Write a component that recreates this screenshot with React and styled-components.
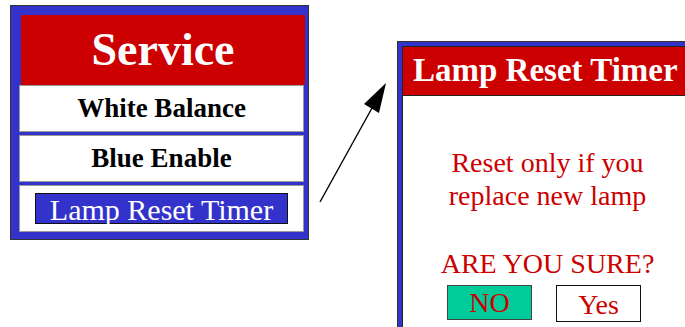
import React from "react";
import styled, { createGlobalStyle } from "styled-components";

const Global = createGlobalStyle`
  html, body { margin: 0; padding: 0; background: #ffffff; overflow: hidden; }
  body { width: 685px; height: 327px; font-family: "Liberation Serif", "Times New Roman", serif; }
`;

const BLUE = "#3333cc";
const RED = "#cc0000";

const Page = styled.div`
  display: flex;
  align-items: flex-start;
  padding: 5px 0 0 10px;
  width: 685px;
  height: 327px;
  box-sizing: border-box;
  overflow: hidden;
`;

const MenuPanel = styled.div`
  flex: none;
  width: 299px;
  box-sizing: border-box;
  border: 1px solid #333;
  background: ${BLUE};
  padding: 9px 4px 7px 8px;
  display: flex;
  flex-direction: column;
`;

const MenuTitle = styled.div`
  margin: 0 -1px 0 2px;
  height: 70px;
  background: ${RED};
  color: #fff;
  font-weight: bold;
  font-size: 46px;
  line-height: 70px;
  text-align: center;
`;

const MenuList = styled.div`
  display: flex;
  flex-direction: column;
  gap: 3px;
`;

const MenuRow = styled.div`
  height: 47px;
  box-sizing: border-box;
  border: 1px solid #999;
  background: #fff;
  display: flex;
  align-items: center;
  justify-content: center;
  font-weight: bold;
  font-size: 27px;
  color: #000;
`;

const Selected = styled.div`
  width: 253px;
  height: 31px;
  box-sizing: border-box;
  border: 1px solid #111;
  background: ${BLUE};
  color: #fff;
  font-weight: normal;
  font-size: 30px;
  line-height: 29px;
  padding-top: 1px;
  text-align: center;
  white-space: nowrap;
`;

const ArrowArt = styled.svg`
  flex: none;
  width: 88px;
  height: 220px;
  display: block;
`;

const Dialog = styled.div`
  flex: none;
  margin-top: 36px;
  width: 302px;
  height: 300px;
  box-sizing: border-box;
  border: 1px solid #333;
  background: ${BLUE};
  padding: 4px 0 0 4px;
  display: flex;
  flex-direction: column;
`;

const DialogTitle = styled.div`
  height: 50px;
  box-sizing: border-box;
  border: 1px solid #222;
  background: ${RED};
  color: #fff;
  font-weight: bold;
  font-size: 33px;
  line-height: 47px;
  padding-left: 10px;
  white-space: nowrap;
`;

const DialogBody = styled.div`
  flex: 1;
  border-left: 1px solid #222;
  background: #fff;
  display: flex;
  flex-direction: column;
  align-items: center;
  padding-top: 50px;
  padding-right: 6px;
  color: #cc0000;
  font-size: 28px;
  line-height: 33px;
`;

const Message = styled.div`
  text-align: center;
  white-space: nowrap;
`;

const Question = styled.div`
  margin-top: 35px;
  white-space: nowrap;
`;

const Buttons = styled.div`
  display: flex;
  align-items: flex-start;
  gap: 24px;
  margin-top: 5px;
  padding-right: 7px;
`;

const Choice = styled.div`
  width: 85px;
  height: ${(p) => (p.$primary ? 35 : 37)}px;
  box-sizing: border-box;
  border: 1px solid ${(p) => (p.$primary ? "#444" : "#111")};
  background: ${(p) => (p.$primary ? "#00cc99" : "#fff")};
  color: #cc0000;
  font-size: 28px;
  line-height: ${(p) => (p.$primary ? 33 : 37)}px;
  text-align: center;
`;

export default function App() {
  return (
    <>
      <Global />
      <Page>
        <MenuPanel>
          <MenuTitle>Service</MenuTitle>
          <MenuList>
            <MenuRow>White Balance</MenuRow>
            <MenuRow>Blue Enable</MenuRow>
            <MenuRow>
              <Selected>Lamp Reset Timer</Selected>
            </MenuRow>
          </MenuList>
        </MenuPanel>
        <ArrowArt viewBox="0 0 88 220">
          <line x1="11" y1="197" x2="63" y2="103" stroke="#000" strokeWidth="1.4" />
          <polygon points="77,78 55,99 70,108" fill="#000" />
        </ArrowArt>
        <Dialog>
          <DialogTitle>Lamp Reset Timer</DialogTitle>
          <DialogBody>
            <Message>
              Reset only if you
              <br />
              replace new lamp
            </Message>
            <Question>ARE YOU SURE?</Question>
            <Buttons>
              <Choice $primary>NO</Choice>
              <Choice>Yes</Choice>
            </Buttons>
          </DialogBody>
        </Dialog>
      </Page>
    </>
  );
}
